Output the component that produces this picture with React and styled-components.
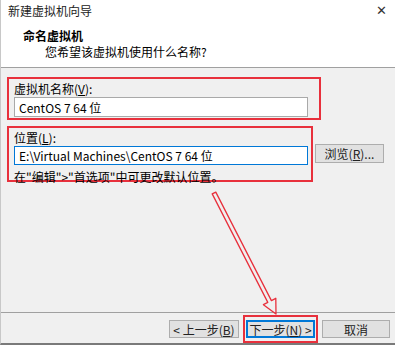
import React from "react";
import styled, { createGlobalStyle } from "styled-components";

const GlobalStyle = createGlobalStyle`
  html, body {
    margin: 0;
    padding: 0;
    background: #f0f0f0;
  }
  body {
    font-family: "Noto Sans CJK SC", "Noto Sans", sans-serif;
    font-size: 12px;
    color: #000;
  }
`;

const Window = styled.div`
  position: relative;
  width: 395px;
  height: 345px;
  background: #f0f0f0;
  display: flex;
  flex-direction: column;
  box-sizing: border-box;
  border-left: 1px solid #c8c8c8;
  border-bottom: 2px solid #7a7a7a;
  overflow: hidden;
`;

const TitleBar = styled.div`
  height: 22px;
  display: flex;
  align-items: center;
  justify-content: space-between;
  padding: 0 8px 0 7px;
  background: #fff;
  font-size: 12px;
  line-height: 12px;
  color: #222;
`;

const Close = styled.span`
  font-family: "DejaVu Sans", sans-serif;
  font-size: 13px;
  color: #333;
  font-weight: 300;
`;

const Header = styled.div`
  height: 46px;
  background: #fff;
  border-bottom: 1px solid #a0a0a0;
  padding: 7px 0 0 22px;
  box-sizing: border-box;
  display: flex;
  flex-direction: column;
  gap: 3px;
`;

const HeaderTitle = styled.div`
  font-weight: bold;
  font-size: 12px;
  line-height: 13px;
`;

const HeaderSub = styled.div`
  padding-left: 22px;
  font-size: 12px;
  line-height: 13px;
`;

const Body = styled.div`
  flex: 1;
  padding: 9px 0 0 6px;
  display: flex;
  flex-direction: column;
  gap: 6px;
`;

const Mark = styled.div`
  box-sizing: border-box;
  border: 2px solid #e8303c;
  width: ${(p) => p.$w}px;
  height: ${(p) => p.$h}px;
  padding: 3px ${(p) => p.$pr}px 0 5px;
  display: flex;
  flex-direction: column;
  gap: 2px;
`;

const Label = styled.div`
  font-size: 12px;
  line-height: 13px;
  color: #000;
  u {
    text-decoration: underline;
    text-underline-offset: 1px;
  }
`;

const Input = styled.div`
  box-sizing: border-box;
  height: 20px;
  width: 294px;
  background: #fff;
  border: 1px solid ${(p) => (p.$focus ? "#0078d7" : "#a9a9a9")};
  padding: 0 4px;
  display: flex;
  align-items: center;
  font-size: 12px;
  color: #000;
`;

const Hint = styled.div`
  margin-top: 3px;
  font-size: 12px;
  line-height: 13px;
`;

const Row = styled.div`
  display: flex;
  align-items: flex-start;
`;

const Button = styled.div`
  box-sizing: border-box;
  width: ${(p) => p.$w}px;
  height: ${(p) => p.$h || 18}px;
  background: #e1e1e1;
  border: 1px solid ${(p) => (p.$primary ? "#0078d7" : "#adadad")};
  box-shadow: ${(p) => (p.$primary ? "inset 0 0 0 1px #0078d7" : "none")};
  display: flex;
  align-items: center;
  justify-content: center;
  font-size: 12px;
  color: #222;
  u {
    text-decoration: underline;
  }
`;

const Browse = styled(Button)`
  margin: 18px 0 0 2px;
`;

const Footer = styled.div`
  height: 31px;
  border-top: 1px solid #a0a0a0;
  display: flex;
  justify-content: flex-end;
  align-items: flex-start;
  padding: 7px 5px 0 0;
  box-sizing: border-box;
`;

const Buttons = styled.div`
  display: flex;
  gap: 8px;
  align-items: center;
`;

const NextMark = styled.div`
  border: 2px solid #e8303c;
  padding: 3px 1px;
  margin: -5px -4px;
`;

const Arrow = styled.svg`
  position: absolute;
  left: 0;
  top: 0;
  pointer-events: none;
`;

export default function App() {
  return (
    <>
      <GlobalStyle />
      <Window>
        <TitleBar>
          <span>新建虚拟机向导</span>
          <Close>✕</Close>
        </TitleBar>
        <Header>
          <HeaderTitle>命名虚拟机</HeaderTitle>
          <HeaderSub>您希望该虚拟机使用什么名称?</HeaderSub>
        </Header>
        <Body>
          <Mark $w={314} $h={43} $pr={11}>
            <Label>
              虚拟机名称(<u>V</u>):
            </Label>
            <Input>CentOS 7 64 位</Input>
          </Mark>
          <Row>
            <Mark $w={306} $h={56} $pr={3}>
              <Label>
                位置(<u>L</u>):
              </Label>
              <Input $focus>E:\Virtual Machines\CentOS 7 64 位</Input>
              <Hint>在"编辑"&gt;"首选项"中可更改默认位置。</Hint>
            </Mark>
            <Browse $w={69} $h={19}>
              浏览(<u>R</u>)...
            </Browse>
          </Row>
        </Body>
        <Footer>
          <Buttons>
            <Button $w={70}>
              &lt; 上一步(<u>B</u>)
            </Button>
            <NextMark>
              <Button $w={69} $primary>
                下一步(<u>N</u>) &gt;
              </Button>
            </NextMark>
            <Button $w={68}>取消</Button>
          </Buttons>
        </Footer>
        <Arrow width="395" height="345" viewBox="0 0 395 345">
          <polygon
            points="214.8,192.1 270.4,300.6 274.8,298.3 275,314 262.4,304.7 266.8,302.4 211.2,193.9"
            fill="none"
            stroke="#e8303c"
            strokeWidth="1.3"
            strokeLinejoin="round"
          />
        </Arrow>
      </Window>
    </>
  );
}
